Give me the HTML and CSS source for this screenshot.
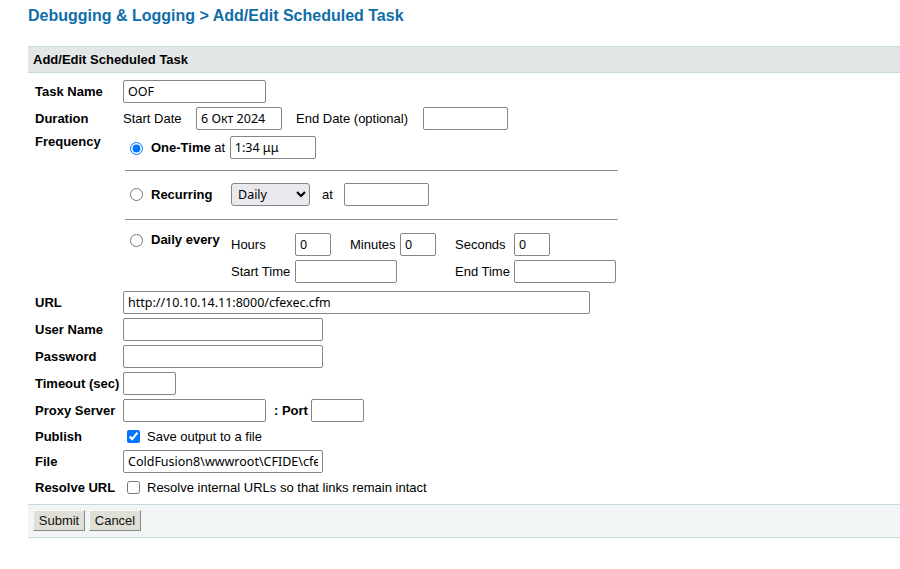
FILE: index.html
```html
<!DOCTYPE html>
<html>
<head>
<meta charset="utf-8">
<title>Add/Edit Scheduled Task</title>
<link rel="stylesheet" href="styles.css">
</head>
<body>
<div class="page">
  <h1 class="title">Debugging &amp; Logging &gt; Add/Edit Scheduled Task</h1>
  <div class="panel-head">Add/Edit Scheduled Task</div>
  <form class="form">
    <div class="lbl">Task Name</div>
    <div class="val"><input class="in w143" value="OOF"></div>

    <div class="lbl">Duration</div>
    <div class="val">
      <span class="txt startlbl">Start Date</span><input class="in w86" value="6 Окт 2024"><span class="txt endlbl">End Date (optional)</span><input class="in w85" value="">
    </div>

    <div class="lbl lbl-top">Frequency</div>
    <div class="freq">
      <div class="fr1">
        <input type="radio" name="freq" class="radio" checked><b class="rl">One-Time</b><span class="txt"> at </span><input class="in w86 onein" value="1:34 μμ">
      </div>
      <div class="rule"></div>
      <div class="fr2">
        <div class="rcell"><input type="radio" name="freq" class="radio"><b class="rl">Recurring</b></div>
        <select class="sel"><option>Daily</option><option>Weekly</option><option>Monthly</option></select>
        <span class="txt atlbl">at</span><input class="in w85" value="">
      </div>
      <div class="rule rule2"></div>
      <div class="fr3">
        <div class="rcell rtop"><input type="radio" name="freq" class="radio"><b class="rl">Daily every</b></div>
        <div class="dgrid">
          <span class="txt">Hours</span><div><input class="in w36" value="0"></div>
          <span class="txt">Minutes</span><div><input class="in w36" value="0"></div>
          <span class="txt">Seconds</span><div><input class="in w36" value="0"></div>
          <span class="txt">Start Time</span><div class="span3"><input class="in w102" value=""></div>
          <span class="txt">End Time</span><div><input class="in w102" value=""></div>
        </div>
      </div>
    </div>

    <div class="lbl">URL</div>
    <div class="val"><input class="in w467" value="http://10.10.14.11:8000/cfexec.cfm"></div>

    <div class="lbl">User Name</div>
    <div class="val"><input class="in w200" value=""></div>

    <div class="lbl">Password</div>
    <div class="val"><input class="in w200" type="password" value=""></div>

    <div class="lbl">Timeout (sec)</div>
    <div class="val"><input class="in w53" value=""></div>

    <div class="lbl">Proxy Server</div>
    <div class="val"><input class="in w143" value=""><b class="portlbl">: Port</b><input class="in w53" value=""></div>

    <div class="lbl">Publish</div>
    <div class="val chk"><input type="checkbox" class="cb" checked><span class="txt">Save output to a file</span></div>

    <div class="lbl">File</div>
    <div class="val"><input class="in w200" value="ColdFusion8\wwwroot\CFIDE\cfexec.cfm"></div>

    <div class="lbl">Resolve URL</div>
    <div class="val chk"><input type="checkbox" class="cb"><span class="txt">Resolve internal URLs so that links remain intact</span></div>
  </form>
  <div class="panel-foot">
    <button type="button" class="btn">Submit</button><button type="button" class="btn">Cancel</button>
  </div>
</div>
</body>
</html>
```

FILE: styles.css
```css
html, body {
  margin: 0;
  padding: 0;
  background: #ffffff;
}
body {
  font-family: "Liberation Sans", Arial, sans-serif;
  font-size: 13px;
  color: #000;
}
.page {
  margin-left: 28px;
  width: 872px;
}
.title {
  margin: 0;
  padding-top: 7px;
  font-size: 16px;
  line-height: 18px;
  font-weight: bold;
  color: #0f6ea9;
}
.panel-head {
  margin-top: 21px;
  border-top: 1px solid #c6dadc;
  border-bottom: 1px solid #c6dadc;
  background: #e3e7e7;
  height: 25px;
  line-height: 25px;
  padding-left: 5px;
  font-weight: bold;
}
.form {
  margin: 7px 0 0 0;
  display: grid;
  grid-template-columns: 95px 1fr;
  row-gap: 4px;
  align-items: center;
}
.lbl {
  padding-left: 7px;
  font-weight: bold;
  line-height: 15px;
  white-space: nowrap;
}
.lbl-top {
  align-self: start;
}
.val {
  display: flex;
  align-items: center;
  height: 23px;
}
.txt {
  white-space: pre;
}
.in {
  box-sizing: border-box;
  height: 23px;
  border: 1px solid #858585;
  border-radius: 2px;
  padding: 0 4px;
  margin: 0;
  font-family: "Noto Sans", "Open Sans", sans-serif;
  font-size: 12.5px;
  color: #000;
  background: #fff;
}
.w36 { width: 36px; }
.w53 { width: 53px; }
.w85 { width: 85px; }
.w86 { width: 86px; }
.w102 { width: 102px; }
.w143 { width: 143px; }
.w200 { width: 200px; }
.w467 { width: 467px; }

.startlbl { width: 73px; }
.endlbl { margin-left: 14px; width: 127px; }

.freq {
  width: 493px;
  margin-left: 2px;
  padding-bottom: 4px;
}
.radio {
  margin: 0 8px 0 5px;
  width: 13px;
  height: 13px;
  flex: none;
}
.rl {
  font-weight: bold;
}
.fr1 {
  margin-top: 2px;
  height: 23px;
  display: flex;
  align-items: center;
}
.fr1 .radio {
  margin-top: 1px;
}
.onein {
  margin-left: 1px;
}
.rule {
  margin-top: 11px;
  height: 0;
  border-top: 1px solid #8e8e8e;
  margin-bottom: 12px;
}
.rule2 {
  margin-top: 13px;
  margin-bottom: 13px;
}
.fr2 {
  height: 23px;
  display: flex;
  align-items: center;
}
.rcell {
  width: 106px;
  display: flex;
  align-items: center;
  flex: none;
}
.rtop {
  align-items: flex-start;
}
.rtop .radio {
  margin-top: 1px;
}
.rtop .rl {
  margin-top: -1px;
}
.sel {
  box-sizing: border-box;
  width: 79px;
  height: 23px;
  margin: 0;
  padding: 0 2px;
  font-family: "Noto Sans", "Open Sans", sans-serif;
  font-size: 12.5px;
  color: #000;
  background-color: #e9e9ed;
  border: 1px solid #858585;
  border-radius: 3px;
}
.atlbl {
  margin-left: 12px;
  margin-right: 11px;
}
.fr3 {
  display: flex;
  align-items: flex-start;
}
.dgrid {
  display: grid;
  grid-template-columns: 64px 55px 50px 55px 59px 102px;
  row-gap: 4px;
  align-items: center;
}
.dgrid > div {
  height: 23px;
}
.span3 {
  grid-column: span 3;
}
.portlbl {
  margin-left: 8px;
  margin-right: 3px;
  font-weight: bold;
}
.chk {
  height: 20px;
}
.cb {
  margin: 0 7px 0 4px;
  width: 13px;
  height: 13px;
  flex: none;
}
.panel-foot {
  margin-top: 7px;
  border-top: 1px solid #c6dadc;
  border-bottom: 1px solid #c6dadc;
  background: #f2f5f5;
  height: 32px;
  padding-left: 5px;
  display: flex;
  align-items: flex-start;
  gap: 4px;
}
.btn {
  margin-top: 5px;
  width: 52px;
  height: 21px;
  padding: 0;
  font-family: "Liberation Sans", Arial, sans-serif;
  font-size: 13px;
  color: #111;
  background: #e0dfd7;
  border: 1px solid;
  border-color: #f6f6f2 #8a8a84 #8a8a84 #f6f6f2;
  border-radius: 0;
}
```
